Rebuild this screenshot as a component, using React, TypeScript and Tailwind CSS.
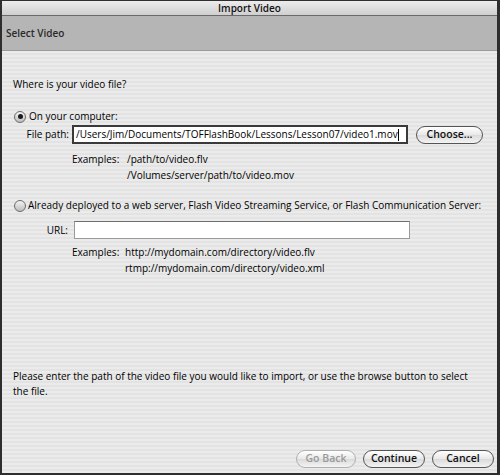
import React from "react";

const font = { fontFamily: '"Open Sans", "DejaVu Sans", sans-serif' };

function Radio({ checked }: { checked?: boolean }) {
  return (
    <div className="w-[12px] h-[12px] rounded-full border border-[#6b6b6b] bg-[linear-gradient(to_bottom,#f4f4f4,#bdbdbd)] flex items-center justify-center shrink-0">
      {checked && <div className="w-[5px] h-[5px] rounded-full bg-[#1a1a1a]" />}
    </div>
  );
}

function PillButton({ label, disabled, w }: { label: string; disabled?: boolean; w: string }) {
  return (
    <div
      className={`${w} h-[18px] rounded-full flex items-center justify-center text-[10.5px] font-semibold bg-[linear-gradient(to_bottom,#ffffff,#e8e8e8_50%,#dadada_51%,#f4f4f4)] ${
        disabled ? "border border-[#b0b0b0] text-[#9a9a9a]" : "border border-[#555] text-[#111]"
      }`}
    >
      {label}
    </div>
  );
}

export default function App() {
  return (
    <div
      className="w-[500px] h-[475px] flex flex-col border-t border-l-2 border-r-[3px] border-b-2 border-[#2e2e2e] bg-[#e8e8e8] text-[#000] overflow-hidden"
      style={font}
    >
      <div className="h-[15px] shrink-0 bg-[linear-gradient(to_bottom,#ececec,#cfcfcf)] border-b border-[#6a6a6a] flex items-center justify-center text-[10px] font-semibold leading-none text-[#111]">
        Import Video
      </div>
      <div className="h-[35px] shrink-0 bg-[#b5b5b5] border-b border-[#9a9a9a] flex items-center pl-[4px] text-[10px] font-semibold text-[#2a2a2a]">
        Select Video
      </div>
      <div className="flex-1 flex flex-col bg-[repeating-linear-gradient(to_bottom,#ebebeb_0px,#ebebeb_2px,#e3e3e3_2px,#e3e3e3_4px)] text-[10px] font-medium whitespace-nowrap">
        <div className="mt-[27px] h-[13px] leading-[13px] pl-[11px]">Where is your video file?</div>
        <div className="mt-[19px] h-[13px] flex items-center pl-[12px] gap-[3px]">
          <Radio checked />
          <span className="leading-[13px]">On your computer:</span>
        </div>
        <div className="mt-[2px] h-[19px] flex items-center">
          <span className="w-[67px] text-right">File path:</span>
          <div className="ml-[3px] w-[336px] h-[19px] bg-white border-2 border-[#3a3a3a] flex items-center pl-[2px] overflow-hidden">
            /Users/Jim/Documents/TOFFlashBook/Lessons/Lesson07/video1.mov
            <span className="w-px h-[12px] bg-black" />
          </div>
          <div className="ml-[8px]">
            <PillButton label="Choose..." w="w-[67px]" />
          </div>
        </div>
        <div className="mt-[7px] flex leading-[16px]">
          <span className="ml-[70px] w-[55px]">Examples:</span>
          <div className="flex flex-col">
            <span>/path/to/video.flv</span>
            <span>/Volumes/server/path/to/video.mov</span>
          </div>
        </div>
        <div className="mt-[16px] h-[13px] flex items-center pl-[12px] gap-[2px]">
          <Radio />
          <span className="leading-[13px]">
            Already deployed to a web server, Flash Video Streaming Service, or Flash Communication Server:
          </span>
        </div>
        <div className="mt-[9px] h-[18px] flex items-center">
          <span className="w-[66px] text-right">URL:</span>
          <div className="ml-[6px] w-[336px] h-[18px] bg-white border border-[#9a9a9a] border-t-[#6e6e6e]" />
        </div>
        <div className="mt-[5px] flex leading-[16px]">
          <span className="ml-[70px] w-[53px]">Examples:</span>
          <div className="flex flex-col">
            <span>http://mydomain.com/directory/video.flv</span>
            <span>rtmp://mydomain.com/directory/video.xml</span>
          </div>
        </div>
        <div className="mt-[93px] pl-[11px] leading-[15px] flex flex-col">
          <span>Please enter the path of the video file you would like to import, or use the browse button to select</span>
          <span>the file.</span>
        </div>
        <div className="mt-[51px] flex justify-end gap-[7px] pr-[3px]">
          <PillButton label="Go Back" disabled w="w-[60px]" />
          <PillButton label="Continue" w="w-[62px]" />
          <PillButton label="Cancel" w="w-[62px]" />
        </div>
      </div>
    </div>
  );
}
